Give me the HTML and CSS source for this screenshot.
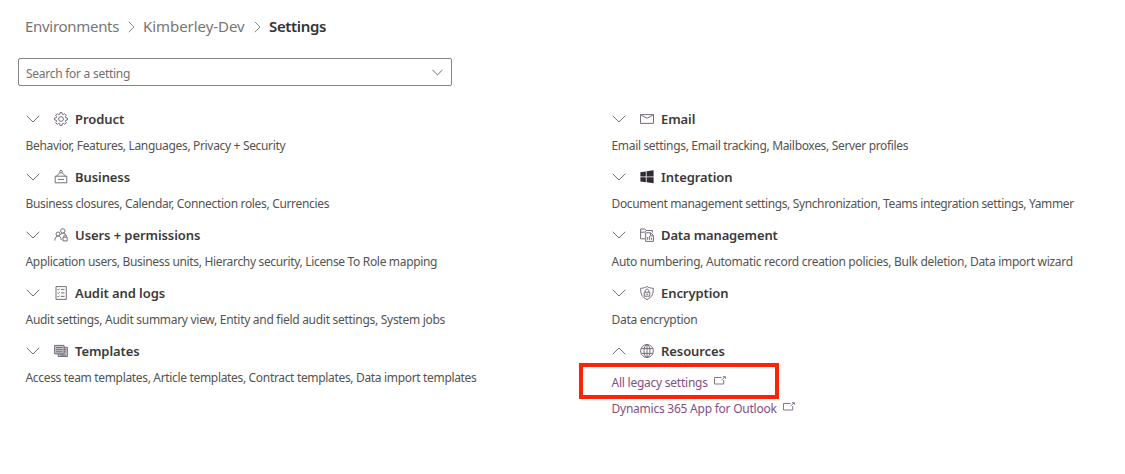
FILE: index.html
```html
<!DOCTYPE html>
<html lang="en">
<head>
<meta charset="utf-8">
<title>Settings</title>
<link rel="stylesheet" href="styles.css">
</head>
<body>
<svg class="defs" width="0" height="0" aria-hidden="true">
  <symbol id="chev" viewBox="0 0 14 8"><path d="M.7.8 7 7 13.3.8"/></symbol>
  <symbol id="ext" viewBox="0 0 12 9"><path d="M7.5 1.5H.5v6.5h9.2V4M7.6 4 11 .9M9 .7h2.4v2.1"/></symbol>
</svg>
<main class="page">
  <nav class="crumbs">
    <a class="crumb crumb-env">Environments</a>
    <svg class="sep" viewBox="0 0 7 12"><path d="M.8.8 6 6 .8 11.2"/></svg>
    <a class="crumb crumb-name">Kimberley-Dev</a>
    <svg class="sep" viewBox="0 0 7 12"><path d="M.8.8 6 6 .8 11.2"/></svg>
    <span class="crumb current">Settings</span>
  </nav>
  <div class="search"><span>Search for a setting</span><svg class="drop"><use href="#chev"/></svg></div>
  <div class="columns">
    <div class="column">
      <section class="group">
        <h2><svg class="chev"><use href="#chev"/></svg><svg class="icon" viewBox="0 0 14 14"><path d="M6 .6h2l.3 1.7 1 .4 1.5-1 1.5 1.5-1 1.5.4 1 1.7.3v2l-1.7.3-.4 1 1 1.5-1.5 1.5-1.5-1-1 .4-.3 1.7H6l-.3-1.7-1-.4-1.5 1-1.5-1.5 1-1.5-.4-1L.6 8V6l1.7-.3.4-1-1-1.5 1.5-1.5 1.5 1 1-.4z"/><circle cx="7" cy="7" r="2.4"/></svg><span>Product</span></h2>
        <p>Behavior, Features, Languages, Privacy + Security</p>
      </section>
      <section class="group">
        <h2><svg class="chev"><use href="#chev"/></svg><svg class="icon" viewBox="0 0 14 14"><path d="M1.2 6.2h11.6v6.6H1.2zM2.3 6.2 6 2.7M11.7 6.2 8 2.7M4 9.4h6"/><circle cx="7" cy="1.7" r="1.3"/></svg><span>Business</span></h2>
        <p>Business closures, Calendar, Connection roles, Currencies</p>
      </section>
      <section class="group">
        <h2><svg class="chev"><use href="#chev"/></svg><svg class="icon" viewBox="0 0 14 14"><circle cx="8.8" cy="2.9" r="2.2"/><circle cx="4" cy="6" r="2"/><path d="M.8 12.6c0-6 6.4-6 6.4-.6M6.2 7c1-2.3 5-2.6 6.1.5M9 9.2h4.2v3.7H9zM9.9 9V7.9c0-1.3 2.4-1.3 2.4 0V9"/></svg><span>Users + permissions</span></h2>
        <p>Application users, Business units, Hierarchy security, License To Role mapping</p>
      </section>
      <section class="group">
        <h2><svg class="chev"><use href="#chev"/></svg><svg class="icon" viewBox="0 0 14 14"><path d="M2 .6h10.3v12.8H2zM7 3.4h3.5M7 6.9h3.5M7 10.4h3.5M3.5 3.3l.8.8 1.3-1.5M3.5 6.8l.8.8 1.3-1.5M3.5 10.3l.8.8 1.3-1.5"/></svg><span>Audit and logs</span></h2>
        <p class="wide">Audit settings, Audit summary view, Entity and field audit settings, System jobs</p>
      </section>
      <section class="group">
        <h2><svg class="chev"><use href="#chev"/></svg><svg class="icon" viewBox="0 0 14 14"><path class="shade" d="M.6 1.4h9.5v8.5H.6zM10.1 3.3h3.3v9.2H4.2V9.9"/><path d="M2 3.6h6.5M2 5.7h6.5M2 7.8h6.5M10.3 5.5h1.8M10.3 7.8h1.8M6 11h6"/></svg><span>Templates</span></h2>
        <p>Access team templates, Article templates, Contract templates, Data import templates</p>
      </section>
    </div>
    <div class="column">
      <section class="group">
        <h2><svg class="chev"><use href="#chev"/></svg><svg class="icon" viewBox="0 0 14 14"><path d="M.5 2.6h13v8.8H.5zM.8 3 7 6.2 13.2 3"/></svg><span>Email</span></h2>
        <p>Email settings, Email tracking, Mailboxes, Server profiles</p>
      </section>
      <section class="group">
        <h2><svg class="chev"><use href="#chev"/></svg><svg class="icon solid" viewBox="0 0 14 14"><path d="M.4 2.2 5.8 1.4v5H.4zM6.6 1.3 13.6.3v6.1h-7zM.4 7.2h5.4v5L.4 11.5zM6.6 7.2h7v6.1l-7-1z"/></svg><span>Integration</span></h2>
        <p class="tight">Document management settings, Synchronization, Teams integration settings, Yammer</p>
      </section>
      <section class="group">
        <h2 class="snug"><svg class="chev"><use href="#chev"/></svg><svg class="icon" viewBox="0 0 14 14"><path d="M5.3 10.8H.6V1h4.2l1.4 1.5h6.2v2M.6 4.2h4.2L6.2 2.7M5.7 4.8h5l2.7 2.7v5.9H5.7zM10.5 5v2.8h2.8M7.7 11.8V9M9.6 11.8V8M11.5 11.8v-2"/></svg><span>Data management</span></h2>
        <p class="wide">Auto numbering, Automatic record creation policies, Bulk deletion, Data import wizard</p>
      </section>
      <section class="group">
        <h2><svg class="chev"><use href="#chev"/></svg><svg class="icon" viewBox="0 0 14 14"><path d="M7 .5C5 1.8 3 2.2.7 2.3c-.2 5.6 1.2 9 6.3 11.2 5.1-2.2 6.5-5.6 6.3-11.2C11 2.2 9 1.8 7 .5zM4.2 6.2h5.6v4H4.2zM5.2 6V4.8c0-2.2 3.6-2.2 3.6 0V6M5.8 8.2h2.4"/></svg><span>Encryption</span></h2>
        <p class="wide">Data encryption</p>
      </section>
      <section class="group">
        <h2><svg class="chev up"><use href="#chev"/></svg><svg class="icon" viewBox="0 0 14 14"><circle cx="7" cy="7" r="6.4"/><ellipse cx="7" cy="7" rx="3" ry="6.4"/><path d="M7 .6v12.8M1.2 4.6h11.6M1.2 9.4h11.6"/></svg><span>Resources</span></h2>
        <div class="links">
          <a class="marked"><span>All legacy settings</span><svg class="ext"><use href="#ext"/></svg></a>
          <a><span>Dynamics 365 App for Outlook</span><svg class="ext"><use href="#ext"/></svg></a>
        </div>
      </section>
    </div>
  </div>
</main>
</body>
</html>
```
FILE: styles.css
```css
body {
  margin: 0;
  background: #fff;
  color: #545352;
  font: 12px/26px "Noto Sans", "Open Sans", sans-serif;
}
svg { fill: none; stroke: #706f70; stroke-width: 1; flex: none; }
.defs { position: absolute; }
.page { padding: 14px 0 0 18px; }
.crumbs {
  display: flex;
  align-items: center;
  height: 26px;
  padding-left: 7px;
  font-size: 15px;
  line-height: 24px;
  color: #777574;
}
.crumb { height: 26px; white-space: nowrap; letter-spacing: -.05px; }
.crumb-env { width: 94px; letter-spacing: -.3px; }
.crumb-name { width: 102px; }
.sep { width: 7px; height: 12px; margin: 0 8px 0 9px; stroke: #8d8c8b; }
.current { color: #343332; font-weight: 600; letter-spacing: -.35px; }
.search {
  box-sizing: border-box;
  display: flex;
  align-items: center;
  justify-content: space-between;
  width: 434px;
  height: 28px;
  margin: 18px 0 20px;
  padding: 3px 8px 0 7px;
  border: 1px solid #858483;
  border-radius: 2px;
  color: #72706f;
  letter-spacing: -.27px;
}
.drop { width: 11px; height: 7px; margin-top: -3px; stroke: #989796; stroke-width: 1.3; }
.columns {
  display: grid;
  grid-template-columns: 586px 1fr;
  padding-left: 7.5px;
}
.group { margin-bottom: 6px; }
.group h2 {
  display: flex;
  align-items: center;
  margin: 0 0 0 -.5px;
  font-size: 13px;
  font-weight: 600;
  letter-spacing: -.08px;
  color: #3b3a39;
}
.group .snug { letter-spacing: -.14px; }
.group p {
  height: 25px;
  margin: 0;
  padding-top: 1px;
  line-height: 25px;
  white-space: nowrap;
  letter-spacing: -.33px;
}
.group .wide { letter-spacing: -.29px; }
.group .tight { letter-spacing: -.37px; }
.chev { width: 14px; height: 8px; margin: 0 14px 0 1px; }
.up { transform: scaleY(-1); }
.icon { width: 14px; height: 14px; margin-right: 7px; stroke: #68606d; stroke-width: .9; }
.solid { fill: #302a32; stroke: none; }
.shade { fill: #c9c6cb; }
.links { padding-top: 6px; letter-spacing: -.24px; }
.links a {
  position: relative;
  display: flex;
  align-items: center;
  color: #854d87;
}
.ext { width: 12px; height: 9px; margin: -5px 0 0 6.5px; stroke: #79657f; stroke-width: .9; }
.marked::after {
  content: "";
  position: absolute;
  box-sizing: border-box;
  left: -32.5px;
  top: -7px;
  width: 200px;
  height: 36px;
  border: 4px solid #fb2506;
}
```
